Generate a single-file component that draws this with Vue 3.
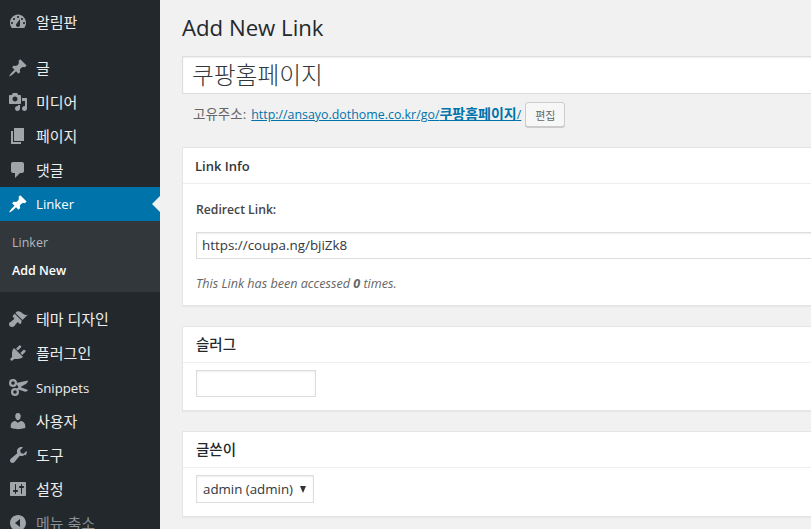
<script setup>
const top = [{ n: '글', i: 'pin', ko: true }, { n: '미디어', i: 'media', ko: true }, { n: '페이지', i: 'page', ko: true }, { n: '댓글', i: 'comment', ko: true }]
const bottom = [
  { n: '테마 디자인', i: 'brush', ko: true }, { n: '플러그인', i: 'plugin', ko: true }, { n: 'Snippets', i: 'cut', ko: false },
  { n: '사용자', i: 'user', ko: true }, { n: '도구', i: 'wrench', ko: true }, { n: '설정', i: 'settings', ko: true }
]
const icons = {
  dash: ['M3.760 16h12.480c1.100-1.430 1.760-3.210 1.760-5.140 0-4.620-3.570-8.360-8-8.360s-8 3.740-8 8.360c0 1.930.66 3.710 1.760 5.140zM10 4c.55 0 1 .45 1 1s-.45 1-1 1-1-.45-1-1 .45-1 1-1zM6 6c.55 0 1 .45 1 1s-.45 1-1 1-1-.45-1-1 .45-1 1-1zM14 6c.55 0 1 .45 1 1s-.45 1-1 1-1-.45-1-1 .45-1 1-1zM8.630 11.550L12 7v6c0 1.100-.9 2-2 2s-2-.9-2-2c0-.57.24-1.080.63-1.450zM4 10c.55 0 1 .45 1 1s-.45 1-1 1-1-.45-1-1 .45-1 1-1zM16 10c.55 0 1 .45 1 1s-.45 1-1 1-1-.45-1-1 .45-1 1-1z'],
  pin: ['M10.440 3.020l1.820-1.820 6.360 6.350-1.830 1.820c-1.050-.68-2.480-.57-3.410.36l-.75.75c-.92.93-1.040 2.350-.35 3.410l-1.830 1.820-2.410-2.420-2.800 2.790c-.42.420-3.380 2.710-3.800 2.290s1.860-3.390 2.280-3.810l2.790-2.790L4.100 9.360l1.830-1.820c1.050.69 2.480.57 3.400-.36l.75-.75c.93-.92 1.050-2.350.36-3.410z'],
  media: ['M13 11V4c0-.55-.45-1-1-1h-1.670L9 1H5L3.670 3H2c-.55 0-1 .45-1 1v7c0 .55.45 1 1 1h10c.55 0 1-.45 1-1zM7 4.500c1.380 0 2.500 1.120 2.500 2.500S8.380 9.500 7 9.500 4.500 8.380 4.500 7 5.620 4.500 7 4.500zM14 6h5v10.500c0 1.380-1.120 2.500-2.500 2.500S14 17.880 14 16.500s1.120-2.500 2.500-2.500c.17 0 .34.020.5.050V9h-3V6zM10 14.050V13h2v3.500c0 1.380-1.120 2.500-2.500 2.500S7 17.880 7 16.500 8.120 14 9.500 14c.17 0 .34.020.5.050z'],
  page: ['M6 15V2h10v13H6zM5 16h8v2H3V5h2v11z'],
  comment: ['M5 2h9c1.100 0 2 .9 2 2v7c0 1.100-.9 2-2 2h-2l-5 5v-5H5c-1.100 0-2-.9-2-2V4c0-1.100.9-2 2-2z'],
  brush: ['M14.480 11.060L7.410 3.990l1.500-1.500c.5-.56 2.300-.47 3.510.32 1.210.8 1.430 1.280 2.910 2.100 1.180.64 2.450 1.260 4.450.85z', 'M13.770 11.770L6.700 4.700 4.930 6.470c-.39.39-.39 1.020 0 1.410l1.060 1.060c.39.39.39 1.030 0 1.420-.6.6-1.430 1.110-2.210 1.690-.35.26-.7.53-1.010.84C1.430 13.230 1 14.090 1 15c0 1.680 1.360 3 3.050 3 .9 0 1.770-.43 2.470-1.120.3-.31.57-.66.83-1.010.58-.78 1.100-1.610 1.700-2.210.39-.39 1.020-.39 1.410 0l1.060 1.060c.39.39 1.020.39 1.410 0z'],
  plugin: ['M13.110 4.360L9.870 7.600 8 5.730l3.240-3.240c.35-.34 1.050-.2 1.560.32.52.51.66 1.210.31 1.550z', 'M5.110 6.130l.91-1.120 9.010 9.010-1.190.84c-.71.71-2.630 1.160-3.820 1.160H6.140L4.900 17.260c-.59.59-1.540.59-2.120 0-.59-.58-.59-1.530 0-2.120l1.240-1.240v-3.880c0-1.130.4-3.190 1.090-3.890z', 'M12.370 10.100l3.240-3.240c.34-.35 1.040-.21 1.550.31.52.51.66 1.210.31 1.550l-3.240 3.250z'],
  cut: ['M5 2a4 4 0 1 1 0 8 4 4 0 0 1 0-8zM5 4.200a1.800 1.800 0 1 0 0 3.600 1.800 1.800 0 0 0 0-3.600z', 'M7 11a4 4 0 1 1 0 8 4 4 0 0 1 0-8zM7 13.200a1.800 1.800 0 1 0 0 3.600 1.800 1.800 0 0 0 0-3.600z', 'M8 6L20 3.500C20 6 18 7 16 8L11 11z', 'M8.500 12L11 9.500 20 13C19 15 17 15 15 14z'],
  user: ['M10 9.250c-2.270 0-2.730-3.440-2.730-3.440C7 4.020 7.820 2 9.970 2c2.160 0 2.980 2.020 2.710 3.810 0 0-.41 3.440-2.680 3.440zM10 11.820L12.720 10c2.390 0 4.520 2.330 4.520 4.530v2.490s-3.650 1.130-7.240 1.130c-3.650 0-7.240-1.130-7.240-1.130v-2.490c0-2.250 1.940-4.480 4.470-4.480z'],
  wrench: ['M16.680 9.770c-1.340 1.340-3.300 1.670-4.950.99l-5.410 6.520c-.99.99-2.590.99-3.580 0s-.99-2.590 0-3.570l6.520-5.420c-.68-1.650-.35-3.610.99-4.950 1.280-1.280 3.120-1.640 4.730-1.080l-2.870 2.870.71 2.830 2.830.71 2.870-2.870c.56 1.610.2 3.450-1.080 4.730z'],
  settings: ['M18 16V4c0-.55-.45-1-1-1H3c-.55 0-1 .45-1 1v12c0 .55.45 1 1 1h14c.55 0 1-.45 1-1zM8 11h1c.55 0 1 .45 1 1s-.45 1-1 1H8v1.500c0 .28-.22.5-.5.5s-.5-.22-.5-.5V13H6c-.55 0-1-.45-1-1s.45-1 1-1h1V5.500c0-.28.22-.5.5-.5s.5.22.5.5V11zM13 9h-1c-.55 0-1-.45-1-1s.45-1 1-1h1V5.500c0-.28.22-.5.5-.5s.5.22.5.5V7h1c.55 0 1 .45 1 1s-.45 1-1 1h-1v5.500c0 .28-.22.5-.5.5s-.5-.22-.5-.5V9z'],
  collapse: ['M10 2c-4.420 0-8 3.580-8 8s3.580 8 8 8 8-3.580 8-8-3.580-8-8-8zM12 14l-5-4 5-4z']
}
</script>

<template>
  <div class="page">
    <aside class="side">
      <a class="item first"><svg class="ic" viewBox="0 0 20 20"><path v-for="d in icons.dash" :key="d" fill-rule="evenodd" :d="d" /></svg><span class="ko">알림판</span></a>
      <div class="group top">
        <a v-for="m in top" :key="m.n" class="item"><svg class="ic" viewBox="0 0 20 20"><path v-for="d in icons[m.i]" :key="d" fill-rule="evenodd" :d="d" /></svg><span class="ko">{{ m.n }}</span></a>
      </div>
      <a class="item active"><svg class="ic" viewBox="0 0 20 20"><path :d="icons.pin[0]" /></svg><span>Linker</span><i class="arrow"></i></a>
      <div class="sub">
        <a class="subitem">Linker</a>
        <a class="subitem cur">Add New</a>
      </div>
      <div class="group bottom">
        <a v-for="m in bottom" :key="m.n" class="item"><svg class="ic" viewBox="0 0 20 20"><path v-for="d in icons[m.i]" :key="d" fill-rule="evenodd" :d="d" /></svg><span :class="m.ko ? 'ko' : 'la'">{{ m.n }}</span></a>
        <a class="item dim"><svg class="ic" viewBox="0 0 20 20"><path fill-rule="evenodd" :d="icons.collapse[0]" /></svg><span class="ko">메뉴 축소</span></a>
      </div>
    </aside>

    <main class="main">
      <h1>Add New Link</h1>
      <div class="title">쿠팡홈페이지</div>
      <div class="perma">
        <span class="plabel">고유주소:</span>
        <a class="plink">http://ansayo.dothome.co.kr/go/<b>쿠팡홈페이지</b>/</a>
        <button class="edit">편집</button>
      </div>

      <section class="box">
        <h2>Link Info</h2>
        <div class="body">
          <label>Redirect Link:</label>
          <div class="field wide">https://coupa.ng/bjiZk8</div>
          <p>This Link has been accessed <b>0</b> times.</p>
        </div>
      </section>

      <section class="box">
        <h2 class="kohead">슬러그</h2>
        <div class="slugbody"><div class="field slug"></div></div>
      </section>

      <section class="box">
        <h2 class="kohead">글쓴이</h2>
        <div class="slugbody">
          <div class="field select"><span>admin (admin)</span><i class="caret"></i></div>
        </div>
      </section>
    </main>
  </div>
</template>

<style>
html, body { margin: 0; overflow: hidden; background: #f1f1f1; }
</style>

<style scoped>
.page {
  display: flex;
  width: 811px;
  height: 529px;
  overflow: hidden;
  background: #f1f1f1;
  font-family: "Open Sans", "Noto Sans CJK KR", sans-serif;
  font-size: 13px;
  color: #444;
}
.side {
  flex: 0 0 160px;
  height: 529px;
  background: #23282d;
  display: flex;
  flex-direction: column;
  overflow: hidden;
}
.item {
  flex: 0 0 34px;
  height: 34px;
  display: flex;
  align-items: center;
  position: relative;
  color: #eee;
  font-size: 13.2px;
  box-sizing: border-box;
}
.item span { margin-left: 8px; white-space: nowrap; }
.item span.ko { font-size: 15px; margin-bottom: 2px; }
.item span.la { margin-top: 2px; }
.ic {
  width: 20px;
  height: 20px;
  margin-left: 8px;
  fill: #a0a5aa;
  flex: none;
}
.first { margin-top: 5px; }
.group { display: flex; flex-direction: column; }
.top { margin-top: 12px; }
.bottom { margin-top: 10px; }
.active { background: #0073aa; color: #fff; }
.active .ic { fill: #fff; }
.arrow {
  position: absolute;
  right: 0;
  top: 9px;
  border: 8px solid transparent;
  border-right-color: #f1f1f1;
  border-left: 0;
}
.dim { color: #8a8f94; }
.sub {
  flex: 0 0 71px;
  background: #32373c;
  box-sizing: border-box;
  padding-top: 8px;
  display: flex;
  flex-direction: column;
}
.subitem {
  height: 28px;
  line-height: 28px;
  padding-left: 12px;
  font-size: 12.5px;
  color: #b4b9be;
}
.cur { color: #fff; font-weight: 600; }

.main {
  flex: 0 0 700px;
  box-sizing: border-box;
  padding-left: 22px;
}
h1 {
  margin: 0;
  padding-top: 13px;
  height: 56px;
  box-sizing: border-box;
  font-size: 22.2px;
  line-height: 30px;
  font-weight: 400;
  color: #23282d;
}
.title {
  height: 38px;
  box-sizing: border-box;
  border: 1px solid #ddd;
  background: #fff;
  padding-left: 9px;
  font-size: 23.7px;
  font-weight: 300;
  line-height: 37px;
  color: #32373c;
  box-shadow: inset 0 1px 2px rgba(0, 0, 0, .07);
}
.perma {
  height: 25px;
  margin-top: 8px;
  padding-left: 11px;
  display: flex;
  align-items: center;
  font-size: 12.4px;
  color: #666;
}
.plabel { margin-right: 5px; margin-bottom: 3px; font-size: 13.5px; }
.plink { margin-bottom: 3px; color: #0073aa; text-decoration: underline; white-space: nowrap; }
.plink b { font-weight: 700; font-size: 14px; }
.edit {
  margin-left: 4px;
  width: 40px;
  height: 25px;
  box-sizing: border-box;
  padding: 0;
  font: 11px "Noto Sans CJK KR", sans-serif;
  color: #666;
  background: #f7f7f7;
  border: 1px solid #ccc;
  border-radius: 3px;
  box-shadow: 0 1px 0 #ccc;
}
.box {
  margin-top: 20px;
  background: #fff;
  border: 1px solid #e5e5e5;
  box-shadow: 0 1px 1px rgba(0, 0, 0, .04);
  box-sizing: border-box;
}
h2 {
  margin: 0;
  height: 36px;
  box-sizing: border-box;
  padding-left: 12px;
  border-bottom: 1px solid #eee;
  font-size: 13px;
  line-height: 37px;
  font-weight: 600;
  color: #32373c;
}
h2.kohead { font-size: 14.5px; line-height: 35px; font-weight: 500; color: #23282d; padding-left: 13px; }
.body { padding: 0 13px; height: 121px; box-sizing: border-box; }
label {
  display: block;
  padding-top: 17px;
  height: 48px;
  box-sizing: border-box;
  line-height: 18px;
  font-weight: 600;
  font-size: 12.2px;
  color: #444;
}
.field {
  box-sizing: border-box;
  border: 1px solid #ddd;
  background: #fff;
  box-shadow: inset 0 1px 2px rgba(0, 0, 0, .07);
  color: #32373c;
  font-size: 13.4px;
}
.wide { height: 27px; line-height: 25px; padding-left: 5px; width: 640px; }
p {
  margin: 16px 0 0;
  font-size: 12.6px;
  line-height: 18px;
  font-style: italic;
  color: #666;
}
.slugbody { padding: 7px 13px 13px; }
.slug { width: 120px; height: 27px; }
.select {
  width: 118px;
  height: 28px;
  padding-left: 6px;
  display: flex;
  align-items: center;
  font-size: 13.3px;
  position: relative;
}
.caret {
  position: absolute;
  right: 7px;
  top: 10px;
  border-left: 3.5px solid transparent;
  border-right: 3.5px solid transparent;
  border-top: 7px solid #333;
}
</style>
